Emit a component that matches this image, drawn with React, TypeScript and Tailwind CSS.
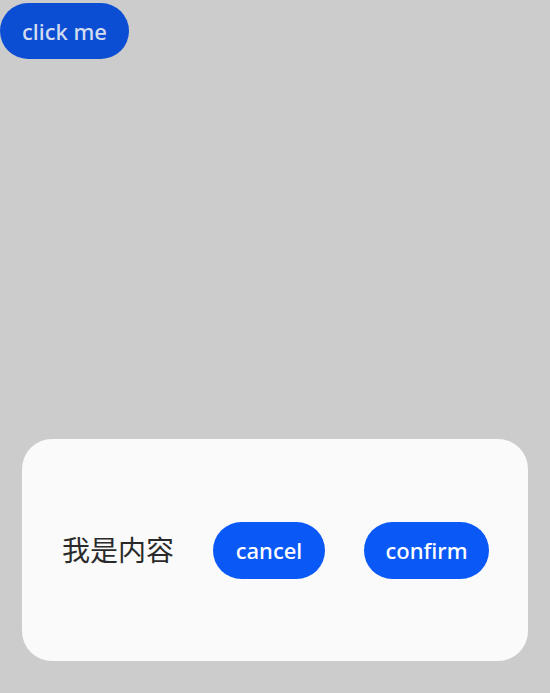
import React from "react";

const App: React.FC = () => {
  return (
    <div
      className="w-[550px] h-[693px] bg-[#cccccc] flex flex-col justify-between overflow-hidden"
      style={{ fontFamily: '"Noto Sans", "Noto Sans CJK SC", sans-serif' }}
    >
      <div className="pt-[3px]">
        <button className="h-[56px] w-[129px] rounded-full bg-[#0b4ed3] text-[#d3dbef] text-[22px] font-medium leading-none">
          click me
        </button>
      </div>
      <div className="px-[22px] pb-[32px]">
        <div className="h-[222px] rounded-[30px] bg-[#fafafa] flex items-center pl-[40px] gap-[39px]">
          <span className="text-[28px] text-[#2a2a2a] leading-none">我是内容</span>
          <button className="h-[57px] w-[112px] rounded-full bg-[#0a59f7] text-white text-[22px] font-medium leading-none">
            cancel
          </button>
          <button className="h-[57px] w-[125px] rounded-full bg-[#0a59f7] text-white text-[22px] font-medium leading-none">
            confirm
          </button>
        </div>
      </div>
    </div>
  );
};

export default App;
